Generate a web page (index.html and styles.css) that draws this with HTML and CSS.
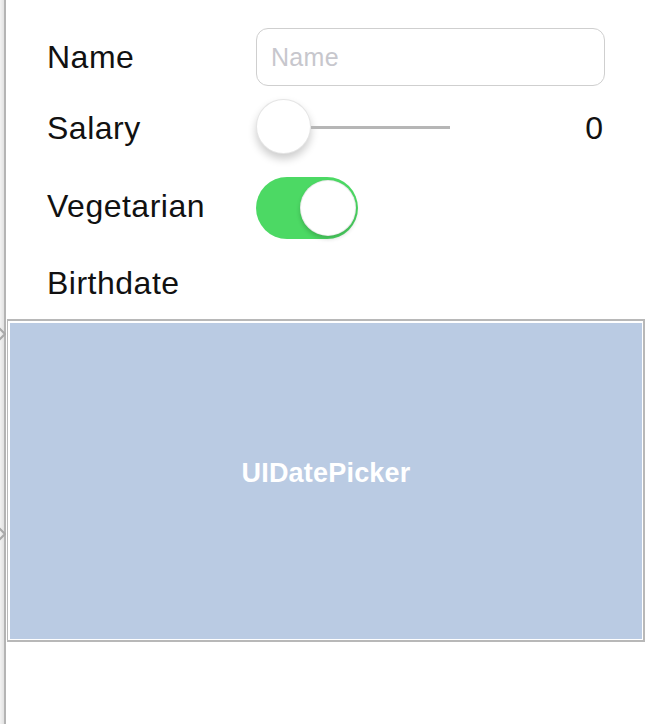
FILE: index.html
```html
<!DOCTYPE html>
<html>
<head>
<meta charset="utf-8">
<link rel="stylesheet" href="styles.css">
</head>
<body>
<div class="edge">
  <svg class="chev chev-top" width="7" height="14" viewBox="0 0 7 14"><path d="M0 1 L6 7 L0 13" fill="none" stroke="#a9a9a9" stroke-width="2"/></svg>
  <svg class="chev chev-bottom" width="7" height="14" viewBox="0 0 7 14"><path d="M0 1 L6 7 L0 13" fill="none" stroke="#a9a9a9" stroke-width="2"/></svg>
</div>
<div class="page">
  <div class="form">
    <div class="row row-name">
      <div class="label">Name</div>
      <div class="control">
        <div class="textfield"><span class="placeholder">Name</span></div>
      </div>
    </div>
    <div class="row row-salary">
      <div class="label label-salary">Salary</div>
      <div class="control slider-control">
        <div class="slider">
          <div class="thumb"></div>
          <div class="track"></div>
        </div>
        <div class="value">0</div>
      </div>
    </div>
    <div class="row row-veg">
      <div class="label label-veg">Vegetarian</div>
      <div class="control">
        <div class="switch"><div class="knob"></div></div>
      </div>
    </div>
    <div class="row row-birth">
      <div class="label">Birthdate</div>
    </div>
  </div>
  <div class="picker-frame">
    <div class="picker"><span class="picker-title">UIDatePicker</span></div>
  </div>
</div>
</body>
</html>
```

FILE: styles.css
```css
html, body {
  margin: 0;
  padding: 0;
  width: 646px;
  height: 724px;
  overflow: hidden;
  background: #fff;
}

body {
  display: flex;
  font-family: "Liberation Sans", Arial, sans-serif;
  color: #111;
}

.edge {
  position: relative;
  width: 4px;
  height: 724px;
  background: linear-gradient(to right, #f2f2f2, #e2e2e2);
  flex: none;
}

.chev {
  position: absolute;
  left: -1px;
}
.chev-top { top: 327px; }
.chev-bottom { top: 527px; }

.page {
  width: 640px;
  height: 724px;
  border-left: 2px solid #b4b4b4;
  display: flex;
  flex-direction: column;
}

.form {
  padding-left: 41px;
  padding-top: 28px;
  display: flex;
  flex-direction: column;
}

.row {
  display: flex;
  align-items: center;
}

.label {
  width: 209px;
  flex: none;
  font-size: 32px;
  line-height: 36px;
  letter-spacing: 0.5px;
  color: #111;
}

.control {
  width: 349px;
  display: flex;
  align-items: center;
}

.row-name { height: 58px; }
.row-salary { height: 56px; margin-top: 12px; }
.row-veg { height: 62px; margin-top: 23px; }
.row-birth { height: 36px; margin-top: 26px; }

.label-salary { padding-top: 3px; }
.label-veg { padding-bottom: 4px; }

.textfield {
  width: 349px;
  height: 58px;
  box-sizing: border-box;
  border: 1px solid #cfcfcf;
  border-radius: 12px;
  display: flex;
  align-items: center;
  padding-left: 14px;
}

.placeholder {
  font-size: 25px;
  color: #c7c7cd;
  letter-spacing: 0.3px;
}

.slider-control {
  justify-content: space-between;
}

.slider {
  display: flex;
  align-items: center;
  width: 194px;
}

.thumb {
  width: 55px;
  height: 55px;
  box-sizing: border-box;
  border-radius: 50%;
  background: #fff;
  border: 1px solid rgba(0, 0, 0, 0.1);
  box-shadow: 0 5px 8px rgba(0, 0, 0, 0.2);
  flex: none;
}

.track {
  flex: 1;
  height: 3px;
  background: #b6b6b6;
  margin-top: 2px;
}

.value {
  font-size: 32px;
  line-height: 36px;
  margin-right: 2px;
  margin-top: 4px;
}

.switch {
  width: 102px;
  height: 62px;
  box-sizing: border-box;
  border-radius: 31px;
  background: #4cd964;
  display: flex;
  align-items: center;
  justify-content: flex-end;
  padding-right: 2px;
}

.knob {
  width: 56px;
  height: 56px;
  box-sizing: border-box;
  border-radius: 50%;
  background: #fff;
  border: 1px solid rgba(0, 0, 0, 0.08);
  box-shadow: 0 3px 4px rgba(0, 0, 0, 0.18);
}

.picker-frame {
  margin-top: 18px;
  margin-left: 1px;
  width: 638px;
  height: 323px;
  box-sizing: border-box;
  border-style: solid;
  border-color: #b8b8b8;
  border-width: 2px 2px 2px 1px;
  padding: 2px 1px 1px 2px;
  background: #fff;
}

.picker {
  width: 100%;
  height: 100%;
  background: #bacbe3;
  display: flex;
  align-items: center;
  justify-content: center;
  box-sizing: border-box;
  padding-bottom: 16px;
}

.picker-title {
  color: #fff;
  font-weight: bold;
  font-size: 27px;
  letter-spacing: 0.2px;
}
```
